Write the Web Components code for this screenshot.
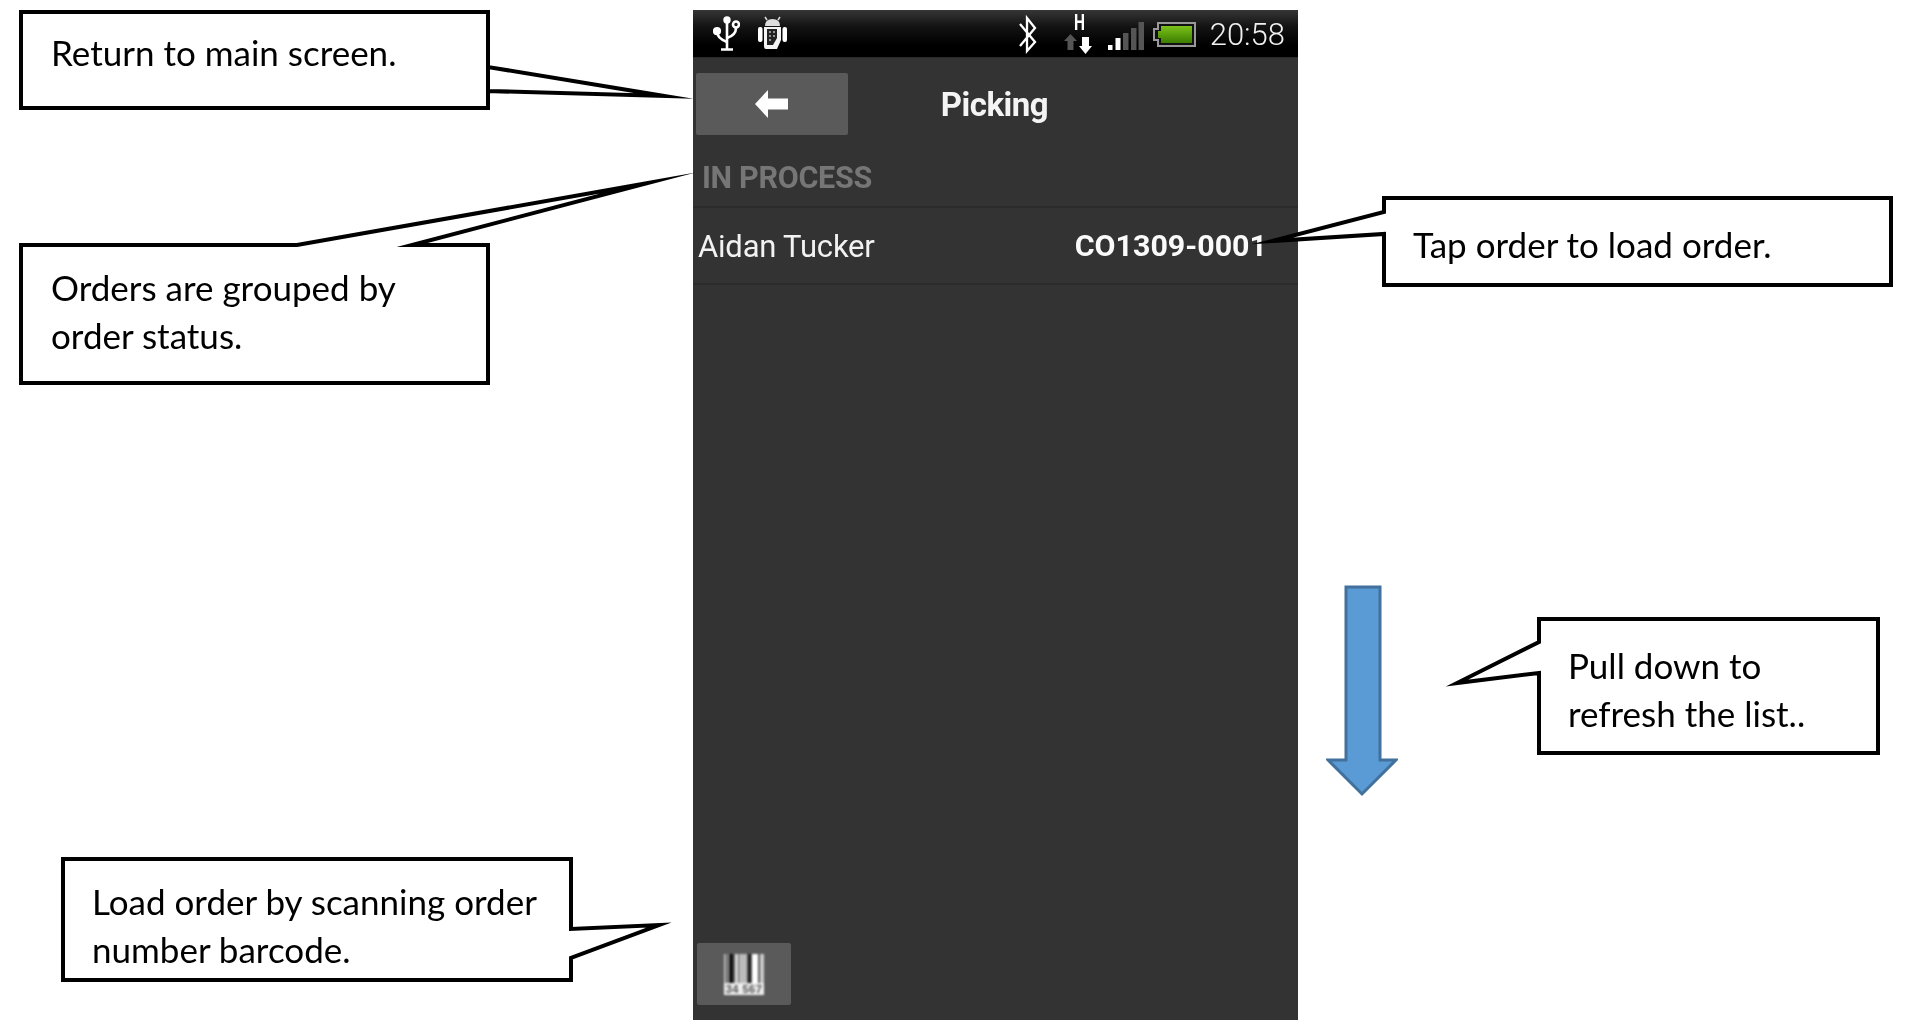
<!DOCTYPE html>
<html><head><meta charset="utf-8"><style>
html,body{margin:0;background:#fff}
body{width:1905px;height:1029px;position:relative;overflow:hidden;box-sizing:border-box;padding:10px 0 0 693px}
</style></head><body>
<phone-screen>
  <status-bar></status-bar>
  <title-bar>Picking</title-bar>
  <section-head>IN PROCESS</section-head>
  <order-row name="Aidan Tucker" code="CO1309-0001"></order-row>
  <scan-button></scan-button>
</phone-screen>
<call-out x="19" y="10" w="471" h="100" pt="18" pl="32" pointer="488,67 664,96 488,91">Return to main screen.</call-out>
<call-out x="19" y="243" w="471" h="142" pt="20" pl="32" pointer="412,245 648,183 297,245">Orders are grouped by<br>order status.</call-out>
<call-out x="1382" y="196" w="511" h="91" pt="24" pl="31" pointer="1384,234 1272,241 1384,212">Tap order to load order.</call-out>
<call-out x="1537" y="617" w="343" h="138" pt="24" pl="31" pointer="1539,673 1457,683 1539,642">Pull down to<br>refresh the list..</call-out>
<call-out x="61" y="857" w="512" h="125" pt="20" pl="31" pointer="571,958 659,925 571,929">Load order by scanning order<br>number barcode.</call-out>
<down-arrow></down-arrow>
<script>
const el=(name,html,cls)=>customElements.define(name,cls||class extends HTMLElement{
  constructor(){super();this.attachShadow({mode:'open'}).innerHTML=html}
});
el('phone-screen',`<style>:host{display:flex;flex-direction:column;width:605px;height:1010px;background:#333;font-family:Roboto,sans-serif;color:#fff}
::slotted(scan-button){margin-top:auto}</style><slot></slot>`);
el('status-bar',`<style>:host{display:flex;flex:none;height:47px;padding:0 13px 0 20px;background:linear-gradient(#363636,#131313 35%,#000 75%,#000);box-shadow:0 1px 0 #2a2a2a}
svg{display:block;flex:none;height:47px;filter:blur(.4px)}
.sp{flex:1}
.time{font:300 31px/50px Roboto,sans-serif;color:#f0f0f0;margin-left:14px;filter:blur(.35px)}</style>
<svg width="27" viewBox="0 0 27 47" fill="none" stroke="#fff" stroke-width="2.6">
  <path d="M14 9V39M8 39.5H20"/><circle cx="14" cy="10" r="2.4" fill="#fff"/>
  <path d="M4 22Q4 28 14 32"/><circle cx="4" cy="21" r="2.8" fill="#fff"/>
  <path d="M23 18Q23 25 14 28"/><circle cx="23" cy="14.5" r="3"/>
</svg>
<svg width="29" viewBox="0 0 29 47" style="margin-left:18px">
  <path d="M7 16Q7 9 14.500 9Q22 9 22 16Z" fill="#ddd"/><path d="M9 10L7 7M20 10L22 7" stroke="#ddd" stroke-width="1.5"/>
  <rect x="0" y="17" width="4.500" height="15" rx="2" fill="#fff"/><rect x="24.500" y="17" width="4.500" height="15" rx="2" fill="#fff"/>
  <path d="M6 17H23V30L19 39H8Q6 39 6 36Z" fill="#f4f4f4"/>
  <path d="M9 19H19V28L15 35H9Z" fill="#222"/>
  <g fill="#bbb"><circle cx="12" cy="22" r="1"/><circle cx="16" cy="22" r="1"/><circle cx="12" cy="26" r="1"/><circle cx="16" cy="26" r="1"/><circle cx="12" cy="30" r="1"/></g>
</svg>
<div class="sp"></div>
<svg width="18" viewBox="0 0 18 47" fill="none" stroke="#fff" stroke-width="2.300"><path d="M1 14L16 32L8 41V8L16 18L1 36"/></svg>
<svg width="28" viewBox="0 0 28 47" style="margin-left:27px">
  <text x="10" y="20" font-family="Roboto" font-weight="700" font-size="22" fill="#fff" textLength="11" lengthAdjust="spacingAndGlyphs">H</text>
  <path d="M6.500 24L13 31H9.500V40H3.500V31H0Z" fill="#555"/>
  <path d="M18 27H25V36H28L21.500 44L15 36H18Z" fill="#fff"/>
</svg>
<svg width="36" viewBox="0 0 36 47" style="margin-left:16px">
  <rect x="0" y="35" width="4.500" height="5" fill="#fff"/><rect x="7.500" y="28" width="5" height="12" fill="#fff"/>
  <rect x="15" y="23" width="5.500" height="17" fill="#555"/><rect x="23" y="18" width="5.500" height="22" fill="#555"/><rect x="30.500" y="12" width="5.500" height="28" fill="#555"/>
</svg>
<svg width="43" viewBox="0 0 43 47" style="margin-left:9px">
  <defs><linearGradient id="g" x1="0" y1="0" x2="0" y2="1"><stop offset="0" stop-color="#7cc21a"/><stop offset="1" stop-color="#3c7d00"/></linearGradient></defs>
  <path d="M5 13H42V36H5V30H1V19H5Z" fill="#111" stroke="#999" stroke-width="2"/>
  <path d="M8 16H39V33H8V28H5V21H8Z" fill="url(#g)"/>
</svg>
<span class="time">20:58</span>`);
el('title-bar',`<style>:host{display:block;position:relative;flex:none;height:78px;margin-top:16px}
button{all:unset;position:absolute;left:3px;top:0;width:152px;height:62px;background:#5a5a5a;border-radius:2px;display:flex;align-items:center;justify-content:center}
svg{margin-left:-2px;filter:blur(.4px)}
.t{display:block;text-align:center;font:700 33px/64px Roboto,sans-serif;letter-spacing:-.5px;color:#f4f4f4;margin-left:-2px;filter:blur(.35px)}</style>
<button aria-label="Back"><svg width="33" height="28" viewBox="0 0 33 28"><path d="M13 0V8.500H33V19.500H13V28L0 14Z" fill="#fff"/></svg></button>
<span class="t"><slot></slot></span>`);
el('section-head',`<style>:host{display:block;flex:none;height:52px;margin-top:5px;padding-left:9px;box-sizing:border-box;border-bottom:2px solid #2b2b2b;font:700 30.500px/44px Roboto,sans-serif;color:#767676;letter-spacing:-.3px}
span{filter:blur(.35px);display:inline-block}</style><span><slot></slot></span>`);
const rowTpl=`<style>:host{display:flex;flex:none;height:77px;box-sizing:border-box;border-bottom:2px solid #2b2b2b;align-items:center;padding:2px 31px 0 5px;font:400 31px/1 Roboto,sans-serif;color:#f2f2f2;letter-spacing:-.2px}
span{filter:blur(.35px)}
.c{margin-left:auto;font-weight:700;font-size:30.400px;color:#fafafa;letter-spacing:0}</style><span id="n"></span><span class="c" id="c"></span>`;
customElements.define('order-row',class extends HTMLElement{
  constructor(){super();this.attachShadow({mode:'open'}).innerHTML=rowTpl}
  connectedCallback(){
    this.shadowRoot.getElementById('n').textContent=this.getAttribute('name');
    this.shadowRoot.getElementById('c').textContent=this.getAttribute('code');
  }
});
el('scan-button',`<style>:host{display:flex;flex:none;align-self:flex-start;width:94px;height:62px;margin:0 0 15px 4px;background:#5a5a5a;border-radius:2px;align-items:center;justify-content:center}
.b{position:relative;width:40px;height:41px;filter:blur(.9px)}
svg{display:block}
.l{position:absolute;left:0;right:0;bottom:0;height:12px;background:#eee;color:#555;font:700 11px/12px "Liberation Sans",sans-serif;text-align:center;white-space:nowrap;letter-spacing:.5px}</style>
<div class="b"><svg width="40" height="30" viewBox="0 0 40 30">
<rect x="0" width="2" height="30" fill="#bbb"/><rect x="4" width="2" height="30" fill="#ccc"/><rect x="5" width="4" height="30" fill="#111"/><rect x="11" width="3" height="30" fill="#ddd"/><rect x="15" width="8" height="30" fill="#bbb"/><rect x="24" width="3" height="30" fill="#222"/><rect x="28" width="6" height="30" fill="#fff"/><rect x="36" width="4" height="30" fill="#ccc"/></svg>
<div class="l">34 567</div></div>`);
customElements.define('call-out',class extends HTMLElement{
  constructor(){super();this.attachShadow({mode:'open'})}
  connectedCallback(){
    const a=n=>+this.getAttribute(n),x=a('x'),y=a('y'),w=a('w'),h=a('h');
    const p=this.getAttribute('pointer').trim().split(/\s+/).map(s=>s.split(',').map(Number));
    const L=x+2,T=y+2,R=x+w-2,B=y+h-2;
    let pts;
    const [p1,p2,p3]=p;
    if(p1[0]>=R-3) pts=[[L,T],[R,T],[R,p3[1]],p2,[R,p1[1]],[R,B],[L,B]];
    else if(p1[0]<=L+3) pts=[[L,T],[R,T],[R,B],[L,B],[L,p1[1]],p2,[L,p3[1]]];
    else pts=[[L,T],[p3[0],T],p2,[p1[0],T],[R,T],[R,B],[L,B]];
    const s=pts.map(q=>(q[0]-x)+','+(q[1]-y)).join(' ');
    this.shadowRoot.innerHTML=`<style>:host{position:absolute;display:block;box-sizing:border-box;left:${x}px;top:${y}px;width:${w}px;height:${h}px;padding:${a('pt')}px 0 0 ${a('pl')}px;font:400 35px/48px Lato,sans-serif;color:#000;white-space:nowrap}
svg{position:absolute;left:0;top:0;overflow:visible;z-index:0}
div{position:relative;z-index:1;filter:blur(.3px)}</style>
<svg width="${w}" height="${h}"><polygon points="${s}" fill="#fff" stroke="#000" stroke-width="4" stroke-miterlimit="40" stroke-linejoin="miter"/></svg><div><slot></slot></div>`;
  }
});
el('down-arrow',`<style>:host{position:absolute;left:1326px;top:584px;display:block;width:72px;height:214px}svg{display:block}</style>
<svg width="72" height="214" viewBox="0 0 72 214"><path d="M20 3H54V176H70L36 210L2 176H20Z" fill="#5b9bd5" stroke="#41719c" stroke-width="3"/></svg>`);
</script>
</body></html>
